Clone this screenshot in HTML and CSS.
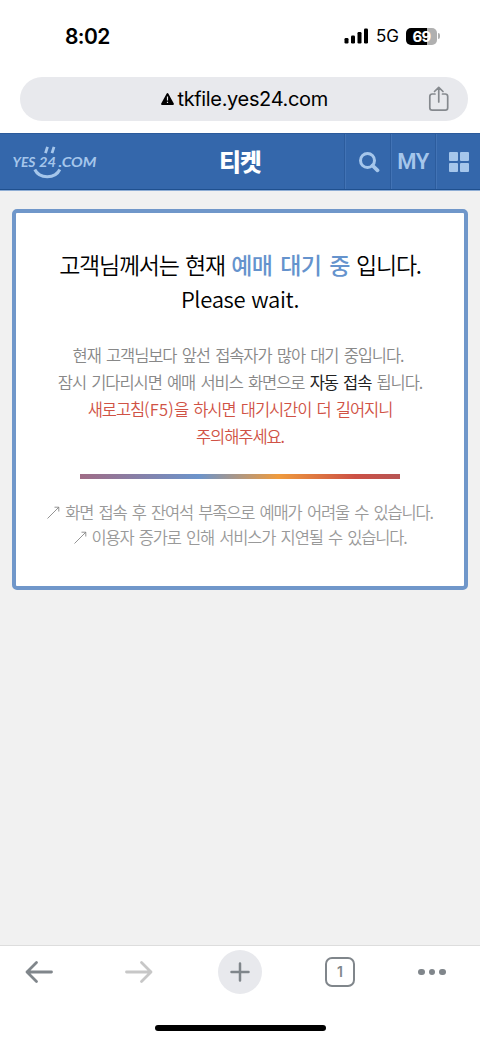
FILE: index.html
```html
<!DOCTYPE html>
<html lang="ko">
<head>
<meta charset="utf-8">
<meta name="viewport" content="width=device-width, initial-scale=1">
<title>티켓</title>
<link rel="stylesheet" href="styles.css">
</head>
<body>
<div class="status">
  <span class="clock">8:02</span>
  <div class="indicators">
    <svg class="signal" width="25" height="16" viewBox="0 0 25 16"><rect x="0.500" y="10" width="4" height="5.4" rx="1.2"/><rect x="7" y="7.500" width="4" height="7.9" rx="1.2"/><rect x="13.500" y="4" width="4" height="11.4" rx="1.2"/><rect x="20" y="0.5" width="4" height="14.9" rx="1.2"/></svg>
    <span class="network">5G</span>
    <div class="battery"><span>69</span></div><i class="cap"></i>
  </div>
</div>
<div class="address">
  <div class="url"><svg width="13" height="12" viewBox="0 0 13 12"><path d="M6.5 1 12 11H1Z" fill="#000" stroke="#000" stroke-width="1.8" stroke-linejoin="round"/><path d="M6.5 3.5v4M6.5 8.8v1.2" stroke="#e8e9ed" stroke-width="1.2"/></svg><span>tkfile.yes24.com</span></div>
  <svg class="share" width="22" height="26" viewBox="0 0 22 26"><path d="M7 8H4.2A2.4 2.4 0 0 0 1.8 10.400V21.800A2.400 2.400 0 0 0 4.200 24.200H17.300A2.400 2.400 0 0 0 19.700 21.800V10.400A2.400 2.400 0 0 0 17.300 8H14.500M10.750 16V1.500M6.500 5.500l4.250-4.200L15 5.500"/></svg>
</div>
<header class="site">
  <svg class="logo" width="88" height="42" viewBox="0 0 88 42"><g class="logo-text"><text x="-.5" y="26.500" textLength="23" lengthAdjust="spacingAndGlyphs">YES</text><text x="26" y="26.500" textLength="17" lengthAdjust="spacingAndGlyphs">24</text><text x="45.500" y="26.500" textLength="38" lengthAdjust="spacingAndGlyphs">.COM</text></g><path d="M34.500 6.800l-2 6.400M41 6.800l-2 6.400" stroke-width="2.800"/><path d="M21.800 29.500c4.500 9.500 20.500 9.500 25 0" stroke-width="3"/></svg>
  <h1>티켓</h1>
  <nav>
    <a class="search"><svg width="22" height="22" viewBox="0 0 22 22"><circle cx="9.500" cy="9.500" r="7" fill="none" stroke-width="3"/><path d="M14.500 14.500l5 4.800" stroke-width="3.800" stroke-linecap="round"/></svg></a>
    <a class="my"><span>MY</span></a>
    <a class="menu"><svg width="20" height="20" viewBox="0 0 20 20"><rect width="9" height="9" rx="1"/><rect x="11" width="9" height="9" rx="1"/><rect y="11" width="9" height="9" rx="1"/><rect x="11" y="11" width="9" height="9" rx="1"/></svg></a>
  </nav>
</header>
<main>
  <section class="card">
    <h2>고객님께서는 현재 <b>예매 대기 중</b> 입니다.<span class="english">Please wait.</span></h2>
    <div class="message">
      <p class="first">현재 고객님보다 앞선 접속자가 많아 대기 중입니다.</p>
      <p>잠시 기다리시면 예매 서비스 화면으로 <b>자동 접속</b> 됩니다.</p>
      <p class="warning">새로고침<span class="key">(F5)</span>을 하시면 대기시간이 더 길어지니</p>
      <p class="warning">주의해주세요.</p>
    </div>
    <div class="bar"></div>
    <ul class="notes">
      <li><svg width="13" height="13" viewBox="0 0 13 13"><path d="M.5 12.500 12 1M7.500 1.200h4.300v4.300"/></svg>화면 접속 후 잔여석 부족으로 예매가 어려울 수 있습니다.</li>
      <li><svg width="13" height="13" viewBox="0 0 13 13"><path d="M.5 12.500 12 1M7.500 1.200h4.300v4.300"/></svg>이용자 증가로 인해 서비스가 지연될 수 있습니다.</li>
    </ul>
  </section>
</main>
<footer>
  <div class="tools">
    <svg class="arrow" width="28" height="24" viewBox="0 0 28 24"><path d="M26.500 12H2M11.500 2.500 2 12l9.500 9.500"/></svg>
    <svg class="arrow disabled" width="28" height="24" viewBox="0 0 28 24"><path d="M1.500 12H26M16.500 2.500 26 12l-9.500 9.500"/></svg>
    <div class="add"><svg width="20" height="20" viewBox="0 0 20 20"><path d="M1.500 10h17M10 1.500v17"/></svg></div>
    <div class="tabs">1</div>
    <div class="more"><i></i><i></i><i></i></div>
  </div>
  <div class="home"></div>
</footer>
</body>
</html>
```

FILE: styles.css
```css
* { box-sizing: border-box; }
body { margin: 0; height: 1041px; display: flex; flex-direction: column; background: #fff; font-family: Inter, "Noto Sans CJK KR", sans-serif; overflow: hidden; }
h1, h2, p, ul { margin: 0; padding: 0; font-weight: 300; }
ul { list-style: none; }
svg { display: block; flex: none; }

.status { height: 77px; padding: 0 40px 5px 65px; display: flex; align-items: center; justify-content: space-between; }
.clock { font-size: 21px; font-weight: 600; letter-spacing: -.6px; }
.indicators { display: flex; align-items: center; }
.network { width: 24px; margin: 0 6px 0 7px; font-size: 17px; letter-spacing: -.2px; }
.battery { width: 31px; height: 17px; border-radius: 5px; background: linear-gradient(90deg, #000 69%, #b0b0b0 69%); color: #fff; font-size: 15px; font-weight: 700; line-height: 17px; text-align: center; letter-spacing: -.8px; }
.cap { width: 2px; height: 6px; margin-left: 1px; border-radius: 0 2px 2px 0; background: #b0b0b0; }

.address { flex: none; height: 44px; margin: 0 12px 12px 20px; padding: 0 18px 0 141px; border-radius: 22px; background: #e8e9ed; display: flex; align-items: center; justify-content: space-between; }
.url { display: flex; align-items: center; gap: 3.500px; font-size: 20px; letter-spacing: -.35px; }
.share { fill: none; stroke: #85898e; stroke-width: 1.700; stroke-linecap: round; stroke-linejoin: round; }

.site { flex: none; height: 57px; margin-bottom: 1px; display: grid; grid-template-columns: 136px 208px 136px; background: #3467ab; border-top: 1px solid #2b5a9b; border-bottom: 1px solid #1f508f; box-shadow: 0 1px #8faed5; }
.logo { margin: 6px 0 0 13px; fill: none; stroke: #a5c6eb; }
.logo-text { fill: #a5c6eb; stroke: none; font: italic 700 14px Lato, sans-serif; }
.site h1 { color: #fff; font: 900 23.500px/54px "Noto Sans CJK KR", sans-serif; letter-spacing: -.9px; text-align: center; }
.site nav { display: grid; grid-template-columns: 46px 45px 45px; }
.site a { display: flex; align-items: center; justify-content: center; border-left: 1px solid #2c5c9d; box-shadow: inset 1px 0 #4273b5; color: #a5c6eb; fill: #a5c6eb; stroke: #a5c6eb; }
.site .search { padding-left: 3px; }
.site .menu { stroke: none; padding-left: 1px; }
.my span { font: 600 22px Roboto, sans-serif; letter-spacing: -.5px; }

main { flex: 1; background: #f1f1f1; padding: 18px 12px; }
.card { height: 381px; padding-top: 34px; border: 4px solid #7097ca; border-radius: 5px; background: #fff; text-align: center; font-family: "Noto Sans CJK KR", sans-serif; white-space: nowrap; }
h2 { color: #000; font-size: 23px; font-weight: 350; line-height: 34px; letter-spacing: -1.250px; word-spacing: 1.200px; }
h2 b { color: #6593cd; font-weight: 500; letter-spacing: -.6px; word-spacing: 2px; }
.english { display: block; font-size: 22px; letter-spacing: -.3px; word-spacing: 0; }
.message { margin-top: 27px; color: #888; font-size: 16.500px; line-height: 27px; letter-spacing: -1.080px; word-spacing: 1.700px; }
.message p, .notes li { font-weight: 350; }
.message .first { padding-right: 4px; }
.message b { color: #222; font-weight: 400; }
.message .warning { color: #d05245; }
.key { letter-spacing: .2px; }
.bar { width: 320px; height: 5px; margin: 24px auto 21px; background: linear-gradient(90deg, #a06c86 0%, #6c94cb 37%, #ef9b3d 62%, #cc5045 86%, #b75554 100%); }
.notes { color: #999; font-size: 16.500px; line-height: 25px; letter-spacing: -1.170px; word-spacing: 1.800px; }
.notes li { display: flex; align-items: center; justify-content: center; gap: 5px; }
.notes svg { fill: none; stroke: #888; stroke-width: .9; }

footer { flex: none; height: 96px; border-top: 1px solid #ddd; display: flex; flex-direction: column; align-items: center; }
.tools { width: 480px; height: 53px; padding-bottom: 1px; display: grid; grid-template-columns: 77px 123px 80px 120px 64px; align-items: center; justify-items: center; }
.arrow { fill: none; stroke: #80868b; stroke-width: 2.800; stroke-linecap: round; stroke-linejoin: round; }
.disabled { stroke: #c7c7c7; }
.add { width: 44px; height: 44px; border-radius: 50%; background: #e8e9ed; display: grid; place-items: center; }
.add svg { stroke: #80868b; stroke-width: 2.500; stroke-linecap: round; }
.tabs { width: 30px; height: 30px; border: 2px solid #80868b; border-radius: 7px; color: #80868b; font-size: 14px; font-weight: 600; line-height: 26px; text-align: center; }
.more { display: flex; gap: 4px; }
.more i { width: 6.500px; height: 6.500px; border-radius: 50%; background: #80868b; }
.home { width: 171px; height: 6px; margin-top: 26px; border-radius: 3px; background: #000; }
```
